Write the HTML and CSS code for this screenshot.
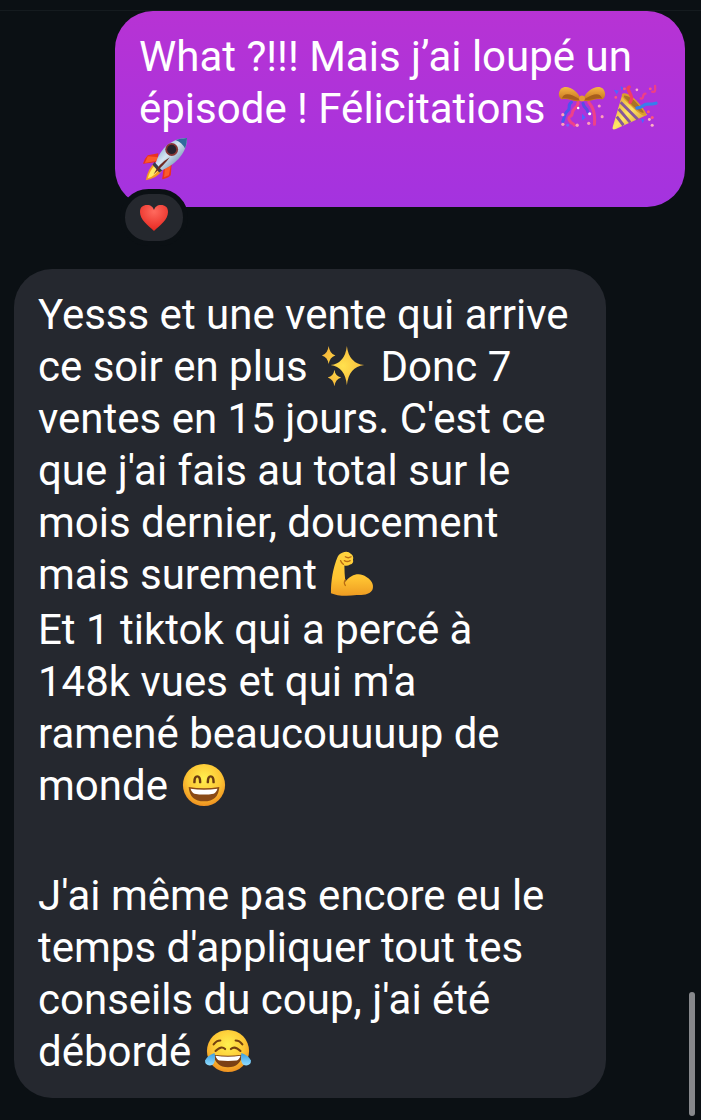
FILE: index.html
```html
<!DOCTYPE html>
<html lang="fr">
<head>
<meta charset="utf-8">
<meta name="viewport" content="width=device-width, initial-scale=1">
<title>Messages</title>
<link rel="stylesheet" href="styles.css">
</head>
<body>
<svg class="defs" aria-hidden="true">
  <defs>
    <radialGradient id="face" cx="50%" cy="35%" r="65%"><stop offset="0" stop-color="#fff04f"/><stop offset=".6" stop-color="#fdc735"/><stop offset="1" stop-color="#ee9020"/></radialGradient>
    <linearGradient id="gold" x1="0" y1="0" x2="0" y2="1"><stop offset="0" stop-color="#f5b544"/><stop offset="1" stop-color="#c4701c"/></linearGradient>
    <linearGradient id="cone" x1="0" y1="0" x2="1" y2="1"><stop offset="0" stop-color="#dc9c24"/><stop offset=".5" stop-color="#ffe566"/><stop offset="1" stop-color="#c98220"/></linearGradient>
    <linearGradient id="hull" x1="0" y1="0" x2="1" y2="1"><stop offset="0" stop-color="#5689b8"/><stop offset=".45" stop-color="#d6e6f2"/><stop offset="1" stop-color="#35618f"/></linearGradient>
    <linearGradient id="arm" x1="0" y1="0" x2="0" y2="1"><stop offset="0" stop-color="#ffd43f"/><stop offset=".6" stop-color="#ffc432"/><stop offset="1" stop-color="#ee9c22"/></linearGradient>
    <radialGradient id="heart" cx="50%" cy="25%" r="75%"><stop offset="0" stop-color="#ff6a5e"/><stop offset="1" stop-color="#e62720"/></radialGradient>
    <radialGradient id="spark"><stop offset="0" stop-color="#ffe14e"/><stop offset="1" stop-color="#f8bc3c"/></radialGradient>
    <linearGradient id="tear" x1="0" y1="0" x2="0" y2="1"><stop offset="0" stop-color="#3a9de0"/><stop offset="1" stop-color="#8fdcff"/></linearGradient>
  </defs>
</svg>
<main class="chat">
  <section class="sent">
    <p class="line">What ?!!! Mais j’ai loupé un<br>épisode ! Félicitations
      <svg class="emoji" viewBox="0 0 48 48" role="img" aria-label="confettis">
        <g fill="none" stroke-width="3.2" stroke-linecap="round"><path d="M13 18c-5 3 0 6-4 9s-3 7-5 11" stroke="#4b55ee"/><path d="M20 18c0 6-6 6-6 11s-6 3-3 8 4 2 5 5" stroke="#ee4189"/><path d="M31 18c4 5 7 10 6 23" stroke="#ee4189"/><path d="M25 19c1 6 5 5 5 9" stroke="#5b4be4"/></g>
        <path d="M23 15C19 5 8-1 2 4c-3 4-3 9 1 11 7-2 13 4 20 1zM25 15C29 5 40-1 46 4c3 4 3 9-1 11-7-2-13 4-20 1z" fill="url(#gold)"/>
        <path d="M3 14c2-6 8-6 19 1-7 2-12-2-19-1zM45 14c-2-6-8-6-19 1 7 2 12-2 19-1z" fill="#a85e1c"/>
        <rect x="21" y="11" width="6" height="6" rx="3" fill="#e59a34"/>
        <g fill="#ff9fb9"><circle cx="4" cy="31" r="1.7"/><circle cx="4" cy="41" r="1.7"/><circle cx="19" cy="42" r="1.7"/><circle cx="31" cy="40" r="1.7"/><circle cx="42" cy="22" r="1.6"/><circle cx="45" cy="33" r="1.6"/></g>
        <g fill="#fff"><circle cx="32" cy="30" r="1.6"/><circle cx="20" cy="24" r="1.3"/></g><path d="m24 30 4 4-4 3z" fill="#5162ff"/><circle cx="9" cy="42" r="1.5" fill="#7161ff"/>
      </svg><svg class="emoji" viewBox="0 0 48 48" role="img" aria-label="fête">
        <path d="M12 9 38 31 5 46c-3 1-4 0-3-3z" fill="url(#cone)"/>
        <path d="m10 18 18 18M8 25l12 14M6 33l7 9" stroke="#86579a" stroke-width="3"/>
        <path d="M12 9c5-2 13 5 18 11s8 10 6 12c-3 1-9-4-15-10S9 11 12 9z" fill="#db9d2c"/>
        <path d="M14 11c4 0 10 4 14 9s7 8 6 9c-3 0-8-4-13-9s-9-8-7-9z" fill="#a97326"/>
        <g fill="none" stroke-linecap="round" stroke-width="3.4"><path d="M20 18c3-4 1-7-1-11s-2-4 0-5" stroke="#f33d62"/><path d="M27 24c6 0 6-4 11-4s6 0 9-1" stroke="#377eed"/><path d="M31 14c4 1 1-5 5-5M43 7c4 1 3-2 3-6" stroke="#ee3f85" stroke-width="2.4"/></g>
        <g fill="#4c67ff"><path d="m3 5 5 1-2 4zM10 1l3 2-2 3zM31 35l4 1-2 4z"/></g><g fill="#ff5579"><circle cx="14" cy="4" r="1.5"/><circle cx="5" cy="13" r="1.4"/><circle cx="41" cy="4" r="1.5"/><circle cx="39" cy="28" r="1.6"/><circle cx="43" cy="34" r="1.6"/></g><g fill="#ffb1c5"><circle cx="40" cy="36" r="1.5"/><circle cx="43" cy="42" r="1.6"/><circle cx="27" cy="5" r="1.4"/></g>
      </svg><br><svg class="emoji" viewBox="0 0 48 48" role="img" aria-label="fusée">
        <path d="M17 17 6 19Q2 23 1 28l15-2zM31 28l-1 12q-4 4-9 4l2-14z" fill="#e9331f"/><path d="m6 20 12 1-4 4-11 2zM30 30l-2 10-5 2 1-9z" fill="#fb5b2b"/>
        <path d="M13 27Q6 33 4 45q12-2 17-10z" fill="#f59a20"/><path d="M14 29q-6 6-8 14 9-3 12-10z" fill="#ffed65"/>
        <path d="M14 28C19 11 32 1 47 1c0 14-10 27-27 34z" fill="url(#hull)"/><path d="M35 3q6-2 12-2 0 5-2 11-3-6-10-9z" fill="#316a9c"/>
        <path d="m13 26 8 9-3 2-7-8z" fill="#383d4b"/><path d="M29 21Q24 28 12 39q5-11 17-18z" fill="#702a24"/><circle cx="31" cy="13" r="6.7" fill="#853634"/><circle cx="31" cy="13" r="4.8" fill="#25232e"/>
      </svg></p>
    <span class="reaction"><svg class="heart" viewBox="0 0 28 28" role="img" aria-label="cœur"><path d="M14 27C8 21 0 16 0 8 0 3 3 1 7 1c4 0 6 2 7 5 1-3 3-5 7-5 4 0 7 2 7 7 0 8-8 13-14 19z" fill="url(#heart)"/></svg></span>
  </section>
  <section class="received">
    <p class="line">Yesss et une vente qui arrive<br>ce soir en plus
      <svg class="emoji" viewBox="0 0 48 48" role="img" aria-label="étincelles"><path d="M27 3q2 18 18 20-16 2-18 21-2-19-17-21Q25 21 27 3zM8 3q1 8 7 10-6 2-7 9-1-7-7-9 6-2 7-10zM14 28q1 7 7 8-6 2-7 9-1-7-7-9 6-1 7-8z" fill="url(#spark)"/></svg>
      Donc 7<br>ventes en 15 jours. C'est ce<br>que j'ai fais au total sur le<br>mois dernier, doucement<br>mais surement
      <svg class="emoji" viewBox="0 0 48 48" role="img" aria-label="biceps"><path d="M1 44C1 31 3 18 8 6Q10 2 15 1q4-1 7 2 3 2 2 6 1 4-3 5-3 2-6 1 0 8 1 17c6-8 15-10 22-5 7 4 8 10 6 14-3 5-10 5-16 5Q10 48 1 44z" fill="url(#arm)"/><path d="M16 6q3 2 6 0M15 10q3 2 6 0M14 14q-2-1-3-4M16 30q-2 3 0 6" fill="none" stroke="#b86c13" stroke-width="1.4" stroke-linecap="round"/></svg></p>
    <p class="line">Et 1 tiktok qui a percé à<br>148k vues et qui m'a<br>ramené beaucouuuup de<br>monde
      <svg class="emoji" viewBox="0 0 48 48" role="img" aria-label="grand sourire"><circle cx="24" cy="24" r="22" fill="url(#face)"/><path d="M14 21q0-6 3-6t3 6M28 21q0-6 3-6t3 6" fill="none" stroke="#6a3a11" stroke-width="2.6" stroke-linecap="round"/><path d="M8 26q16 3 32 0-1 15-16 15T8 26z" fill="#8a4a16"/><path d="M10 28q14 2 28 0-1 4-4 5-10 2-20 0-3-1-4-5z" fill="#fff"/></svg></p>
    <p class="line"><br></p>
    <p class="line">J'ai même pas encore eu le<br>temps d'appliquer tout tes<br>conseils du coup, j'ai été<br>débordé
      <svg class="emoji" viewBox="0 0 48 48" role="img" aria-label="pleurer de rire"><circle cx="24" cy="24" r="22" fill="url(#face)"/><path d="M9 17q3-4 7-4M39 17q-3-4-7-4M11 24q6-6 10-2M37 24q-6-6-10-2" fill="none" stroke="#74400f" stroke-width="2.2" stroke-linecap="round"/><path d="M9 28q15 2 30 0-2 13-15 13T9 28z" fill="#7b4014"/><path d="M11 29q13 2 26 0-1 4-4 5-9 1-18 0-3-1-4-5z" fill="#fff"/><path d="M10 26q2 13-5 13-5 0-5-5 2-5 10-8zM38 26q-2 13 5 13 5 0 5-5-2-5-10-8z" fill="url(#tear)"/></svg></p>
  </section>
  <div class="scrollbar"></div>
</main>
</body>
</html>
```
FILE: styles.css
```css
* { box-sizing: border-box; }
body {
  display: flow-root;
  margin: 0;
  background: #0b1014;
}
.defs { position: absolute; width: 0; height: 0; }
.chat {
  position: relative;
  display: flex;
  flex-direction: column;
  gap: 62px;
  margin-top: 10px;
  padding: 0 16px 22px 14px;
  border-top: 1px solid #151b1f;
  color: #fff;
  font: 400 42px/52px Roboto, "Liberation Sans", sans-serif;
}
.sent, .received {
  position: relative;
  padding: 20px 24px;
  border-radius: 38px;
}
.sent {
  align-self: flex-end;
  width: 85%;
  max-width: 570px;
  background: linear-gradient(#b733d4, #a433df);
}
.received {
  display: flex;
  flex-direction: column;
  gap: 3px;
  align-self: flex-start;
  width: 90%;
  max-width: 592px;
  background: #25282f;
}
.line { margin: 0; white-space: nowrap; }
.emoji {
  width: 46px;
  height: 46px;
  margin: -4px 3px;
  vertical-align: -4px;
  overflow: visible;
}
.reaction {
  position: absolute;
  left: 5px;
  bottom: -39px;
  display: flex;
  align-items: center;
  justify-content: center;
  width: 68px;
  height: 57px;
  border: 5px solid #0b1014;
  border-radius: 29px;
  background: #25282e;
}
.heart { width: 28px; height: 28px; }
.scrollbar {
  position: absolute;
  right: 6px;
  bottom: 4px;
  width: 6px;
  height: 124px;
  border-radius: 3px;
  background: #87888c;
}
```
